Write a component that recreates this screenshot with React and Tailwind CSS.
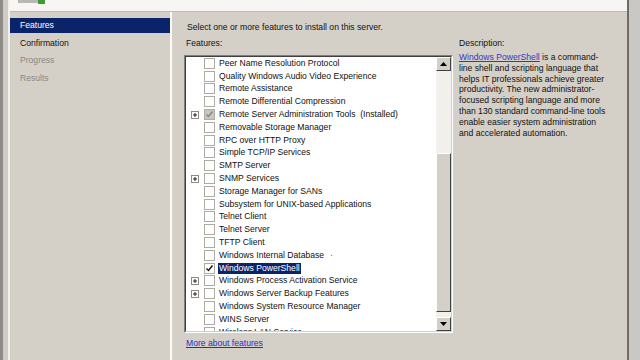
import React from 'react';

const features = [
  { label: 'Peer Name Resolution Protocol' },
  { label: 'Quality Windows Audio Video Experience' },
  { label: 'Remote Assistance' },
  { label: 'Remote Differential Compression' },
  { label: 'Remote Server Administration Tools  (Installed)', expand: true, installed: true },
  { label: 'Removable Storage Manager' },
  { label: 'RPC over HTTP Proxy' },
  { label: 'Simple TCP/IP Services' },
  { label: 'SMTP Server' },
  { label: 'SNMP Services', expand: true },
  { label: 'Storage Manager for SANs' },
  { label: 'Subsystem for UNIX-based Applications' },
  { label: 'Telnet Client' },
  { label: 'Telnet Server' },
  { label: 'TFTP Client' },
  { label: 'Windows Internal Database', dot: true },
  { label: 'Windows PowerShell', checked: true, selected: true },
  { label: 'Windows Process Activation Service', expand: true },
  { label: 'Windows Server Backup Features', expand: true },
  { label: 'Windows System Resource Manager' },
  { label: 'WINS Server' },
  { label: 'Wireless LAN Service' },
];

const navItems = [
  { label: 'Features', active: true },
  { label: 'Confirmation' },
  { label: 'Progress', muted: true },
  { label: 'Results', muted: true },
];

const Expander = () => (
  <div className="w-[8px] h-[8px] border border-[#8e8b86] bg-white flex items-center justify-center">
    <svg width="6" height="6" viewBox="0 0 6 6">
      <path d="M1 3h4M3 1v4" stroke="#222" strokeWidth="1" />
    </svg>
  </div>
);

const CheckBox = ({ checked, installed }) => (
  <div className={`w-[11px] h-[11px] border border-[#aeaba5] flex items-center justify-center ${installed ? 'bg-[#c9c6c1]' : 'bg-white'}`}>
    {checked && (
      <svg width="9" height="9" viewBox="0 0 9 9">
        <path d="M1.5 4.5l2 2 4-5" fill="none" stroke="#111" strokeWidth="1.4" />
      </svg>
    )}
    {installed && (
      <svg width="9" height="9" viewBox="0 0 9 9">
        <path d="M1.5 4.5l2 2 4-5" fill="none" stroke="#8a8782" strokeWidth="1.4" />
      </svg>
    )}
  </div>
);

const ScrollButton = ({ up }) => (
  <div className="h-[14px] bg-[#d4d0c8] border border-t-white border-l-white border-r-[#404040] border-b-[#404040] flex items-center justify-center">
    <svg width="7" height="4" viewBox="0 0 7 4">
      {up ? <path d="M0 4h7L3.5 0z" fill="#000" /> : <path d="M0 0h7L3.5 4z" fill="#000" />}
    </svg>
  </div>
);

const App = () => {
  return (
    <div className="w-[640px] h-[360px] overflow-hidden flex bg-[#d4d0c8] font-['Liberation_Sans',Arial,sans-serif] text-[8.6px] text-[#111]">
      {/* window chrome left */}
      <div className="w-[10px] bg-[#cfccc7] border-l-[3px] border-l-[#8f8c88] border-r-2 border-r-[#f2f0ec]" />

      <div className="flex-1 flex flex-col min-w-0">
        <div className="h-[12px] bg-[#f8f6f4] border-b border-[#bdb9b2] pl-[8px] flex items-start">
          <svg width="28" height="5" viewBox="0 0 28 5">
            <rect x="0" y="0" width="20" height="3" fill="#b9b7b3" />
            <rect x="20" y="0" width="7" height="4" fill="#3f9a3a" />
          </svg>
        </div>

        <div className="flex flex-1 min-h-0">
          {/* left nav */}
          <div className="w-[162px] pt-[6px] border-r-2 border-r-[#fbfaf8]">
            {navItems.map((item) => (
              <div key={item.label} className={`h-[15px] mb-[2.6px] pl-[10px] flex items-center ${item.active ? 'bg-[#0a246a] text-white' : item.muted ? 'text-[#8b8885]' : 'text-[#111]'}`}>
                {item.label}
              </div>
            ))}
          </div>

          {/* content */}
          <div className="flex-1 pl-[12px] flex flex-col">
            <div className="mt-[10px] h-[11px] leading-[11px] pl-[3px]">Select one or more features to install on this server.</div>

            <div className="flex mt-[5px]">
              <div className="flex flex-col">
                <div className="h-[11px] leading-[11px] pl-[2px]">Features:</div>
                <div className="mt-[6px] w-[269px] h-[278px] border border-t-[#808080] border-l-[#808080] border-r-white border-b-white">
                  <div className="w-full h-full border border-t-[#404040] border-l-[#404040] border-r-[#d4d0c8] border-b-[#d4d0c8] bg-white flex">
                    <div className="flex-1 overflow-hidden">
                      {features.map((f) => (
                        <div key={f.label} className="h-[12.8px] flex items-center">
                          <div className="w-[18px] pl-[5px] flex items-center">{f.expand && <Expander />}</div>
                          <CheckBox checked={f.checked} installed={f.installed} />
                          <span className={`ml-[3px] px-[1px] leading-[11px] whitespace-pre ${f.selected ? 'bg-[#0a246a] text-white' : ''}`}>{f.label}</span>
                          {f.dot && <span className="ml-[5px] text-[#555]">·</span>}
                        </div>
                      ))}
                    </div>
                    <div className="w-[15px] flex flex-col">
                      <ScrollButton up />
                      <div className="flex-1 bg-[#f2f0ed]">
                        <div className="mt-[82px] h-[159px] bg-[#d4d0c8] border border-t-white border-l-white border-r-[#404040] border-b-[#404040]" />
                      </div>
                      <ScrollButton />
                    </div>
                  </div>
                </div>
              </div>

              <div className="ml-[6px] w-[160px] flex flex-col">
                <div className="h-[11px] leading-[11px]">Description:</div>
                <p className="mt-[3px] leading-[10.8px]">
                  <span className="text-[#3535c8] underline">Windows PowerShell</span> is a command-<br />
                  line shell and scripting language that<br />
                  helps IT professionals achieve greater<br />
                  productivity. The new administrator-<br />
                  focused scripting language and more<br />
                  than 130 standard command-line tools<br />
                  enable easier system administration<br />
                  and accelerated automation.
                </p>
              </div>
            </div>

            <div className="mt-[5px] h-[11px] leading-[11px] pl-[2px] text-[#2a2ad0] underline">More about features</div>
          </div>
        </div>
      </div>

      {/* window chrome right */}
      <div className="w-[13px] bg-[#cac8c4] border-l-2 border-l-[#6e6c69]" />
    </div>
  );
};

export default App;
